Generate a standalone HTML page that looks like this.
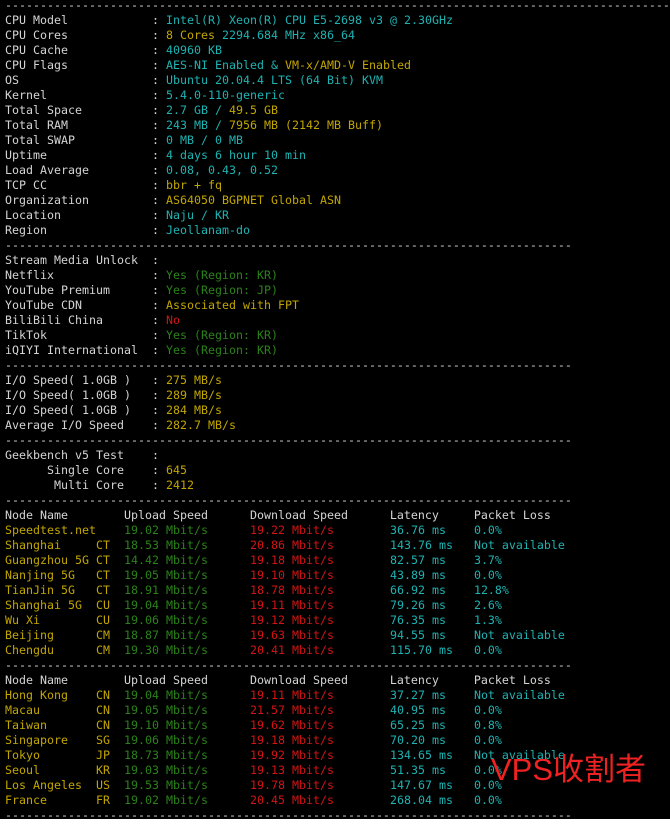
<!DOCTYPE html>
<html><head><meta charset="utf-8"><style>
html,body{margin:0;padding:0;background:#000;width:670px;height:824px;overflow:hidden;position:relative}
pre{position:absolute;left:5px;top:-2px;margin:0;font-family:"DejaVu Sans Mono","Liberation Mono",monospace;font-size:11.63px;line-height:15px;color:#d4d4d4;white-space:pre}
.c{color:#1fb2b2}.y{color:#c2a600}.g{color:#2b821a}.r{color:#d21414}
.wm{position:absolute;left:491px;top:750px;font-family:"Liberation Sans","Noto Sans CJK SC",sans-serif;font-size:31px;color:#ee2222;line-height:40px}
.wb{position:absolute;left:0;top:819px;width:670px;height:5px;background:#fff}
</style></head><body>
<pre>--------------------------------------------------------------------------------------------------
CPU Model            : <span class="c">Intel(R) Xeon(R) CPU E5-2698 v3 @ 2.30GHz</span>
CPU Cores            : <span class="y">8 Cores</span> <span class="c">2294.684 MHz x86_64</span>
CPU Cache            : <span class="c">40960 KB</span>
CPU Flags            : <span class="c">AES-NI Enabled &amp; </span><span class="y">VM-x/AMD-V Enabled</span>
OS                   : <span class="c">Ubuntu 20.04.4 LTS (64 Bit) KVM</span>
Kernel               : <span class="c">5.4.0-110-generic</span>
Total Space          : <span class="c">2.7 GB / </span><span class="y">49.5 GB</span>
Total RAM            : <span class="c">243 MB / </span><span class="y">7956 MB (2142 MB Buff)</span>
Total SWAP           : <span class="c">0 MB / 0 MB</span>
Uptime               : <span class="c">4 days 6 hour 10 min</span>
Load Average         : <span class="c">0.08, 0.43, 0.52</span>
TCP CC               : <span class="y">bbr + fq</span>
Organization         : <span class="y">AS64050 BGPNET Global ASN</span>
Location             : <span class="c">Naju / KR</span>
Region               : <span class="c">Jeollanam-do</span>
---------------------------------------------------------------------------------
Stream Media Unlock  :
Netflix              : <span class="g">Yes (Region: KR)</span>
YouTube Premium      : <span class="g">Yes (Region: JP)</span>
YouTube CDN          : <span class="y">Associated with FPT</span>
BiliBili China       : <span class="r">No</span>
TikTok               : <span class="g">Yes (Region: KR)</span>
iQIYI International  : <span class="g">Yes (Region: KR)</span>
---------------------------------------------------------------------------------
I/O Speed( 1.0GB )   : <span class="y">275 MB/s</span>
I/O Speed( 1.0GB )   : <span class="y">289 MB/s</span>
I/O Speed( 1.0GB )   : <span class="y">284 MB/s</span>
Average I/O Speed    : <span class="y">282.7 MB/s</span>
---------------------------------------------------------------------------------
Geekbench v5 Test    :
      Single Core    : <span class="y">645</span>
       Multi Core    : <span class="y">2412</span>
---------------------------------------------------------------------------------
Node Name        Upload Speed      Download Speed      Latency     Packet Loss
<span class="y">Speedtest.net    </span><span class="g">19.02 Mbit/s      </span><span class="r">19.22 Mbit/s        </span><span class="c">36.76 ms    0.0%</span>
<span class="y">Shanghai     CT  </span><span class="g">18.53 Mbit/s      </span><span class="r">20.86 Mbit/s        </span><span class="c">143.76 ms   Not available</span>
<span class="y">Guangzhou 5G CT  </span><span class="g">14.42 Mbit/s      </span><span class="r">19.18 Mbit/s        </span><span class="c">82.57 ms    3.7%</span>
<span class="y">Nanjing 5G   CT  </span><span class="g">19.05 Mbit/s      </span><span class="r">19.10 Mbit/s        </span><span class="c">43.89 ms    0.0%</span>
<span class="y">TianJin 5G   CT  </span><span class="g">18.91 Mbit/s      </span><span class="r">18.78 Mbit/s        </span><span class="c">66.92 ms    12.8%</span>
<span class="y">Shanghai 5G  CU  </span><span class="g">19.04 Mbit/s      </span><span class="r">19.11 Mbit/s        </span><span class="c">79.26 ms    2.6%</span>
<span class="y">Wu Xi        CU  </span><span class="g">19.06 Mbit/s      </span><span class="r">19.12 Mbit/s        </span><span class="c">76.35 ms    1.3%</span>
<span class="y">Beijing      CM  </span><span class="g">18.87 Mbit/s      </span><span class="r">19.63 Mbit/s        </span><span class="c">94.55 ms    Not available</span>
<span class="y">Chengdu      CM  </span><span class="g">19.30 Mbit/s      </span><span class="r">20.41 Mbit/s        </span><span class="c">115.70 ms   0.0%</span>
---------------------------------------------------------------------------------
Node Name        Upload Speed      Download Speed      Latency     Packet Loss
<span class="y">Hong Kong    CN  </span><span class="g">19.04 Mbit/s      </span><span class="r">19.11 Mbit/s        </span><span class="c">37.27 ms    Not available</span>
<span class="y">Macau        CN  </span><span class="g">19.05 Mbit/s      </span><span class="r">21.57 Mbit/s        </span><span class="c">40.95 ms    0.0%</span>
<span class="y">Taiwan       CN  </span><span class="g">19.10 Mbit/s      </span><span class="r">19.62 Mbit/s        </span><span class="c">65.25 ms    0.8%</span>
<span class="y">Singapore    SG  </span><span class="g">19.06 Mbit/s      </span><span class="r">19.18 Mbit/s        </span><span class="c">70.20 ms    0.0%</span>
<span class="y">Tokyo        JP  </span><span class="g">18.73 Mbit/s      </span><span class="r">19.92 Mbit/s        </span><span class="c">134.65 ms   Not available</span>
<span class="y">Seoul        KR  </span><span class="g">19.03 Mbit/s      </span><span class="r">19.13 Mbit/s        </span><span class="c">51.35 ms    0.0%</span>
<span class="y">Los Angeles  US  </span><span class="g">19.53 Mbit/s      </span><span class="r">19.78 Mbit/s        </span><span class="c">147.67 ms   0.0%</span>
<span class="y">France       FR  </span><span class="g">19.02 Mbit/s      </span><span class="r">20.45 Mbit/s        </span><span class="c">268.04 ms   0.0%</span>
---------------------------------------------------------------------------------</pre>
<div class="wm">VPS收割者</div>
<div class="wb"></div>
</body></html>
